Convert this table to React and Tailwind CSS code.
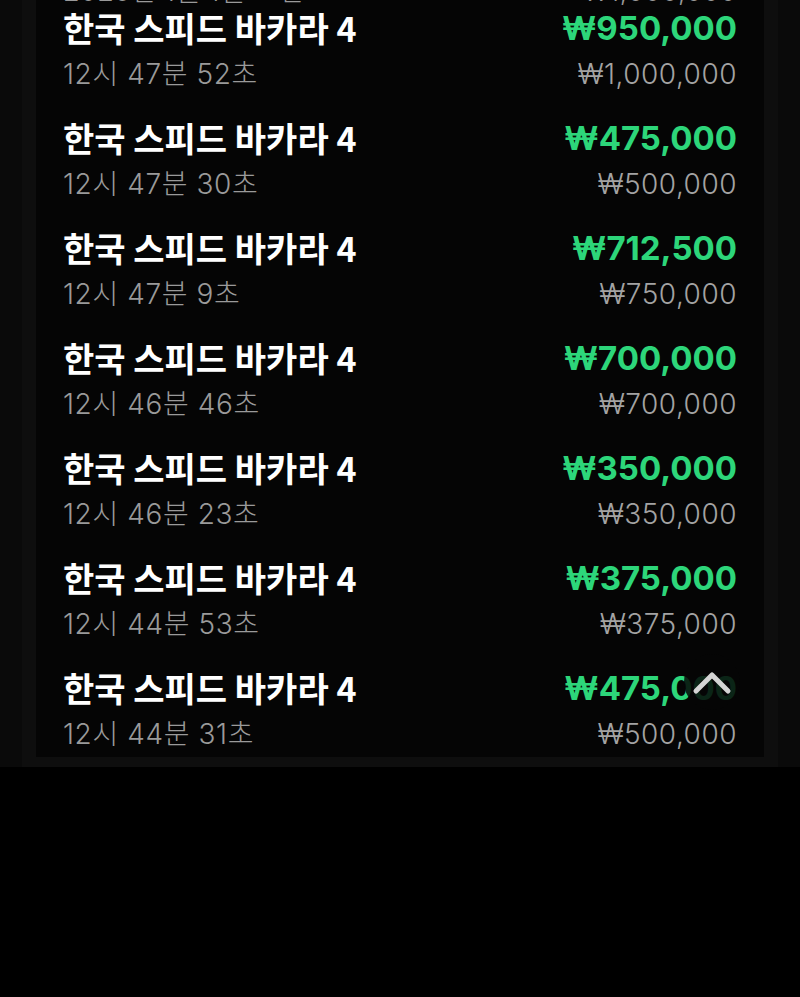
import React from "react";

const rows = [
  ["12시 47분 52초", "₩950,000", "₩1,000,000"],
  ["12시 47분 30초", "₩475,000", "₩500,000"],
  ["12시 47분 9초", "₩712,500", "₩750,000"],
  ["12시 46분 46초", "₩700,000", "₩700,000"],
  ["12시 46분 23초", "₩350,000", "₩350,000"],
  ["12시 44분 53초", "₩375,000", "₩375,000"],
  ["12시 44분 31초", "₩475,000", "₩500,000"],
];

export default function App() {
  return (
    <div className="min-h-[997px] w-[800px] bg-black overflow-hidden font-['Inter','Noto_Sans_CJK_KR',sans-serif]">
      <div className="relative h-[767px] overflow-hidden bg-[#0a0a0a] px-[22px]">
        <div className="h-full bg-[#0e0e0e] px-[14px]">
          <div className="h-[757px] overflow-hidden bg-[#050505] px-[27px]">
            <div className="-mt-[20px]">
              <div className="flex h-[24px] items-center justify-between text-[27px] leading-[24px] text-[#9a9a9a] font-light tracking-[0.5px]">
                <span>2025년 1월 1일 오전</span>
                <span>₩1,000,000</span>
              </div>
              <div className="pt-[2px]">
                {rows.map((r, i) => (
                  <div
                    key={i}
                    className={
                      i === rows.length - 1
                        ? "flex justify-between pb-[3px]"
                        : "flex justify-between pb-[22px]"
                    }
                  >
                    <div className="flex flex-col">
                      <div className="text-[34px] font-bold leading-[44px] text-white font-['Noto_Sans_CJK_KR',sans-serif]">
                        한국 스피드 바카라 4
                      </div>
                      <div className="mt-[4px] text-[28px] leading-[40px] text-[#9a9a9a] font-light tracking-[0.6px]">
                        {r[0]}
                      </div>
                    </div>
                    <div className="flex flex-col items-end">
                      <div className="text-[33px] font-bold leading-[44px] text-[#2dd67a]">
                        {r[1]}
                      </div>
                      <div className="mt-[4px] text-[28px] font-light leading-[40px] text-[#a3a3a3] tracking-[0.5px]">
                        {r[2]}
                      </div>
                    </div>
                  </div>
                ))}
              </div>
            </div>
          </div>
        </div>
        <button className="absolute left-[684px] top-[654px] flex h-[56px] w-[56px] items-center justify-center rounded-full bg-[rgba(6,6,6,0.85)]">
          <svg width="40" height="26" viewBox="0 0 40 26" fill="none">
            <path
              d="M4 22 L20 6 L36 22"
              stroke="#d4d4d4"
              strokeWidth="5"
              strokeLinecap="round"
              strokeLinejoin="round"
            />
          </svg>
        </button>
      </div>
    </div>
  );
}
